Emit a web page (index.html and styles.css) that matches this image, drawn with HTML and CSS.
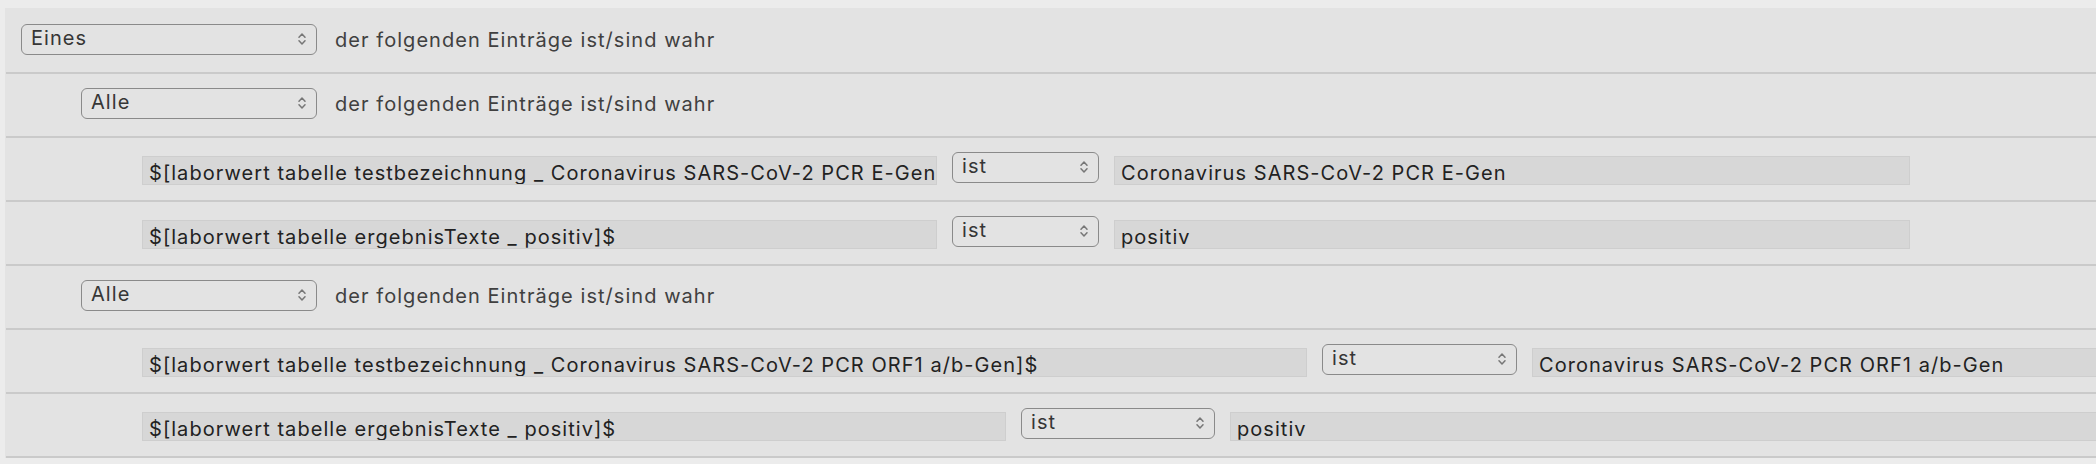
FILE: index.html
```html
<!DOCTYPE html>
<html lang="de">
<head>
<meta charset="utf-8">
<title>Prädikat-Editor</title>
<link rel="stylesheet" href="styles.css">
</head>
<body>
<div class="editor">
  <div class="row lvl0">
    <div class="popup popup-any">
      <span class="popup-text">Eines</span>
      <svg class="chev" viewBox="0 0 8 14" width="8" height="14"><path d="M1 5.2 L4 2 L7 5.2 M1 8.8 L4 12 L7 8.8"/></svg>
    </div>
    <span class="label">der folgenden Einträge ist/sind wahr</span>
  </div>
  <div class="row lvl1">
    <div class="popup popup-all">
      <span class="popup-text">Alle</span>
      <svg class="chev" viewBox="0 0 8 14" width="8" height="14"><path d="M1 5.2 L4 2 L7 5.2 M1 8.8 L4 12 L7 8.8"/></svg>
    </div>
    <span class="label">der folgenden Einträge ist/sind wahr</span>
  </div>
  <div class="row lvl2 cmp-a">
    <div class="field key">$[laborwert tabelle testbezeichnung _ Coronavirus SARS-CoV-2 PCR E-Gen]$</div>
    <div class="popup op">
      <span class="popup-text">ist</span>
      <svg class="chev" viewBox="0 0 8 14" width="8" height="14"><path d="M1 5.2 L4 2 L7 5.2 M1 8.8 L4 12 L7 8.8"/></svg>
    </div>
    <div class="field value">Coronavirus SARS-CoV-2 PCR E-Gen</div>
  </div>
  <div class="row lvl2 cmp-a">
    <div class="field key">$[laborwert tabelle ergebnisTexte _ positiv]$</div>
    <div class="popup op">
      <span class="popup-text">ist</span>
      <svg class="chev" viewBox="0 0 8 14" width="8" height="14"><path d="M1 5.2 L4 2 L7 5.2 M1 8.8 L4 12 L7 8.8"/></svg>
    </div>
    <div class="field value">positiv</div>
  </div>
  <div class="row lvl1">
    <div class="popup popup-all">
      <span class="popup-text">Alle</span>
      <svg class="chev" viewBox="0 0 8 14" width="8" height="14"><path d="M1 5.2 L4 2 L7 5.2 M1 8.8 L4 12 L7 8.8"/></svg>
    </div>
    <span class="label">der folgenden Einträge ist/sind wahr</span>
  </div>
  <div class="row lvl2 cmp-b">
    <div class="field key">$[laborwert tabelle testbezeichnung _ Coronavirus SARS-CoV-2 PCR ORF1 a/b-Gen]$</div>
    <div class="popup op">
      <span class="popup-text">ist</span>
      <svg class="chev" viewBox="0 0 8 14" width="8" height="14"><path d="M1 5.2 L4 2 L7 5.2 M1 8.8 L4 12 L7 8.8"/></svg>
    </div>
    <div class="field value">Coronavirus SARS-CoV-2 PCR ORF1 a/b-Gen</div>
  </div>
  <div class="row lvl2 cmp-c">
    <div class="field key">$[laborwert tabelle ergebnisTexte _ positiv]$</div>
    <div class="popup op">
      <span class="popup-text">ist</span>
      <svg class="chev" viewBox="0 0 8 14" width="8" height="14"><path d="M1 5.2 L4 2 L7 5.2 M1 8.8 L4 12 L7 8.8"/></svg>
    </div>
    <div class="field value">positiv</div>
  </div>
</div>
</body>
</html>
```

FILE: styles.css
```css
html, body {
  margin: 0;
  padding: 0;
  background: #ececec;
  overflow: hidden;
}

body {
  padding: 8px 0 0 5px;
  font-family: Inter, "Liberation Sans", sans-serif;
  font-size: 20px;
  letter-spacing: 1.05px;
  color: #3c3c3c;
}

.editor {
  background: #e3e3e3;
  padding-top: 2px;
}

.row {
  display: flex;
  align-items: flex-start;
  height: 64px;
  box-sizing: border-box;
  padding-top: 14px;
  border-bottom: 2px solid #cacaca;
  gap: 15px;
  overflow: hidden;
  white-space: nowrap;
  margin-left: 1px;
}

.lvl0 { padding-left: 15px; gap: 18px; }
.lvl1 { padding-left: 75px; gap: 18px; }
.lvl2 { padding-left: 136px; }

.popup {
  flex: none;
  display: flex;
  align-items: flex-start;
  justify-content: space-between;
  box-sizing: border-box;
  height: 31px;
  border: 1.5px solid #8a8a8a;
  border-radius: 6px;
  padding: 0 10px 0 9px;
  color: #363636;
}

.popup-text {
  line-height: 22px;
  margin-top: 2px;
}

.chev {
  margin-top: 7px;
  flex: none;
}

.chev path {
  fill: none;
  stroke: #777;
  stroke-width: 1.5;
  stroke-linecap: round;
  stroke-linejoin: round;
}

.popup-any { width: 296px; }
.popup-all { width: 236px; }

.label {
  line-height: 22px;
  margin-top: 5px;
  color: #404040;
}

.field {
  flex: none;
  box-sizing: border-box;
  height: 29px;
  margin-top: 4px;
  background: #d7d7d7;
  border: 1px solid #cecece;
  padding: 4px 6px 0 6px;
  line-height: 24px;
  overflow: hidden;
  color: #222;
}

.cmp-a .key { width: 795px; }
.cmp-a .op { width: 147px; }
.cmp-a .value { width: 796px; }

.cmp-b .key { width: 1165px; }
.cmp-b .op { width: 195px; }
.cmp-b .value { width: 800px; }

.cmp-c .key { width: 864px; }
.cmp-c .op { width: 194px; }
.cmp-c .value { width: 1000px; }
```
